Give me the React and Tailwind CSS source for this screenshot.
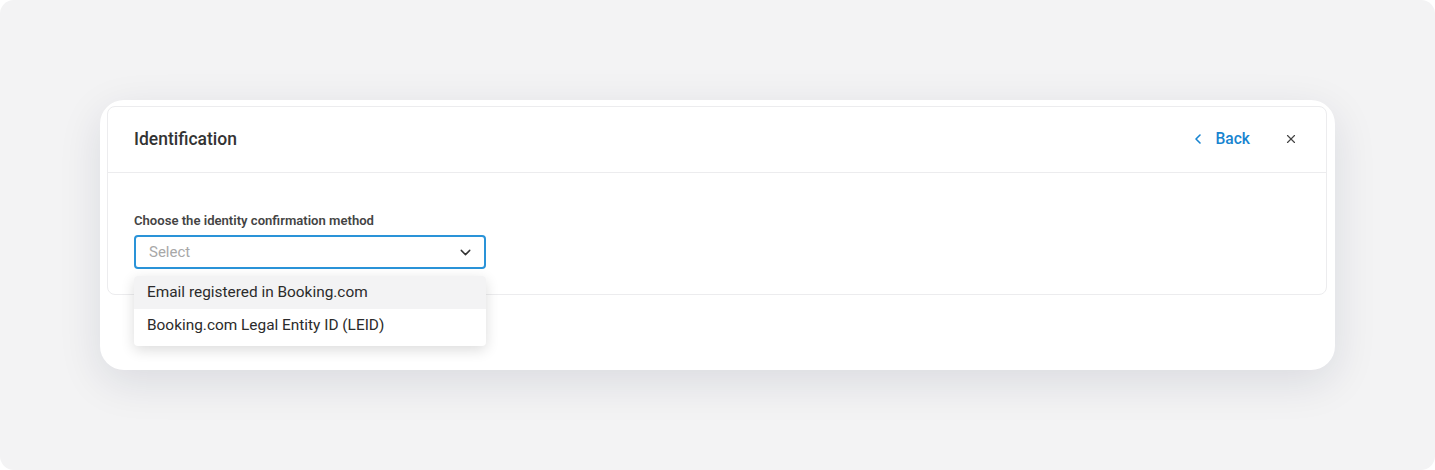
import { ChevronLeft, ChevronDown, X } from "lucide-react";

const options = [
  "Email registered in Booking.com",
  "Booking.com Legal Entity ID (LEID)",
];

export default function App() {
  return (
    <div className="w-[1435px] h-[470px] bg-white" style={{ fontFamily: "Roboto, 'Liberation Sans', sans-serif" }}>
      <div className="w-full h-full rounded-[14px] bg-[#f3f3f4] pt-[100px] px-[100px]">
        <div className="h-[270px] rounded-[24px] bg-white shadow-[0_12px_44px_rgba(20,30,60,0.11)] pt-[6px] px-[7px] pr-[8px]">
          <div className="rounded-[8px] border border-[#ececee] bg-white">
            {/* header */}
            <div className="h-[66px] flex items-center justify-between pl-[26px] pr-[28px] border-b border-[#ececee]">
              <h2 className="text-[17.5px] font-medium text-[#333]">Identification</h2>
              <div className="flex items-center">
                <button className="flex items-center gap-[9px] text-[#1784d0] text-[15.6px] font-medium">
                  <ChevronLeft size={16} strokeWidth={2.4} />
                  <span>Back</span>
                </button>
                <button className="ml-[34px] text-[#444]">
                  <X size={14} strokeWidth={2} />
                </button>
              </div>
            </div>

            {/* body */}
            <div className="pt-[40px] pb-[25px] pl-[26px]">
              <label className="block text-[13.1px] font-semibold text-[#444] leading-[16px]">
                Choose the identity confirmation method
              </label>
              <div className="relative w-[352px] mt-[6px]">
                <div className="h-[34px] flex items-center justify-between border-[2px] border-[#2a93d8] rounded-[4px] pl-[13px] pr-[10px]">
                  <span className="text-[15px] text-[#a8a8a8]">Select</span>
                  <ChevronDown size={17} strokeWidth={2} className="text-[#333]" />
                </div>
                <ul className="absolute left-0 right-0 top-[41px] bg-white rounded-[4px] shadow-[0_4px_14px_rgba(0,0,0,0.14)] overflow-hidden z-10">
                  {options.map((o, i) => (
                    <li
                      key={o}
                      className={`h-[33px] flex items-center pl-[13px] text-[15.4px] text-[#2b2b2b] ${i === 0 ? "bg-[#f3f3f4]" : "bg-white"}`}
                    >
                      {o}
                    </li>
                  ))}
                  <li className="h-[4px]" />
                </ul>
              </div>
            </div>
          </div>
        </div>
      </div>
    </div>
  );
}
